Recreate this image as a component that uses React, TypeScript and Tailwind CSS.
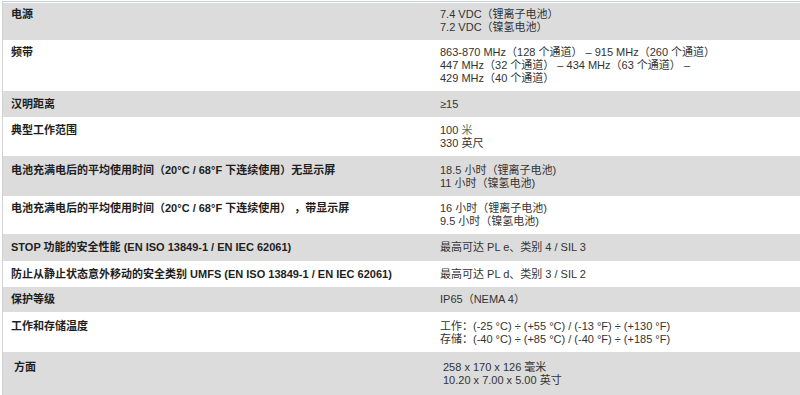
import React from "react";

type Spec = {
  label: React.ReactNode;
  lines: React.ReactNode[];
  h: string;
  pt: string;
  shade: boolean;
  shift?: boolean;
};

const specs: Spec[] = [
  { label: "电源", lines: ["7.4 VDC（锂离子电池）", "7.2 VDC（镍氢电池）"], h: "h-[37px]", pt: "pt-[5px]", shade: true },
  {
    label: "频带",
    lines: [
      "863-870 MHz（128 个通道） – 915 MHz（260 个通道）",
      "447 MHz（32 个通道） – 434 MHz（63 个通道） –",
      "429 MHz（40 个通道）",
    ],
    h: "h-[51px]",
    pt: "pt-[6px]",
    shade: false,
  },
  { label: "汉明距离", lines: ["≥15"], h: "h-[26px]", pt: "pt-[7px]", shade: true },
  {
    label: "典型工作范围",
    lines: [
      <>
        100 <span className="text-[#5c6e5a]">米</span>
      </>,
      "330 英尺",
    ],
    h: "h-[39px]",
    pt: "pt-[7px]",
    shade: false,
  },
  {
    label: "电池充满电后的平均使用时间（20°C / 68°F 下连续使用）无显示屏",
    lines: ["18.5 小时（锂离子电池)", "11 小时（镍氢电池)"],
    h: "h-[40px]",
    pt: "pt-[8px]",
    shade: true,
  },
  {
    label: "电池充满电后的平均使用时间（20°C / 68°F 下连续使用） ，带显示屏",
    lines: ["16 小时（锂离子电池)", "9.5 小时（镍氢电池)"],
    h: "h-[38px]",
    pt: "pt-[6px]",
    shade: false,
  },
  {
    label: "STOP 功能的安全性能 (EN ISO 13849-1 / EN IEC 62061)",
    lines: ["最高可达 PL e、类别 4 / SIL 3"],
    h: "h-[27px]",
    pt: "pt-[7px]",
    shade: true,
  },
  {
    label: "防止从静止状态意外移动的安全类别 UMFS (EN ISO 13849-1 / EN IEC 62061)",
    lines: ["最高可达 PL d、类别 3 / SIL 2"],
    h: "h-[26px]",
    pt: "pt-[7px]",
    shade: false,
  },
  { label: "保护等级", lines: ["IP65（NEMA 4）"], h: "h-[25px]", pt: "pt-[6px]", shade: true },
  {
    label: "工作和存储温度",
    lines: [
      "工作：(-25 °C) ÷ (+55 °C) / (-13 °F) ÷ (+130 °F)",
      "存储：(-40 °C) ÷ (+85 °C) / (-40 °F) ÷ (+185 °F)",
    ],
    h: "h-[40px]",
    pt: "pt-[8px]",
    shade: false,
  },
  {
    label: "方面",
    lines: ["258 x 170 x 126 毫米", "10.20 x 7.00 x 5.00 英寸"],
    h: "h-[43px]",
    pt: "pt-[9px]",
    shade: true,
    shift: true,
  },
];

export default function App() {
  return (
    <div className="w-[800px] h-[395px] overflow-hidden bg-white pt-[1px] font-['Liberation_Sans','Noto_Sans_CJK_SC',sans-serif] text-[11px] leading-[13px]">
      <div className="border-t border-[#c6cfd8] ml-[2px] border-l border-l-[#d2d2d2]">
        <div className="h-[1px] bg-white" />
        {specs.map((s, i) => (
          <div key={i} className={`flex ${s.h} ${s.shade ? "bg-[#dcdcdc]" : "bg-white"}`}>
            <div
              className={`w-[437px] shrink-0 ${s.pt} ${s.shift ? "pl-[11px]" : "pl-[8px]"} font-bold text-[#1e1e1e]`}
            >
              {s.label}
            </div>
            <div className={`flex-1 ${s.pt} ${s.shift ? "pl-[3px]" : ""} text-[#333333]`}>
              {s.lines.map((l, j) => (
                <div key={j}>{l}</div>
              ))}
            </div>
          </div>
        ))}
      </div>
    </div>
  );
}
